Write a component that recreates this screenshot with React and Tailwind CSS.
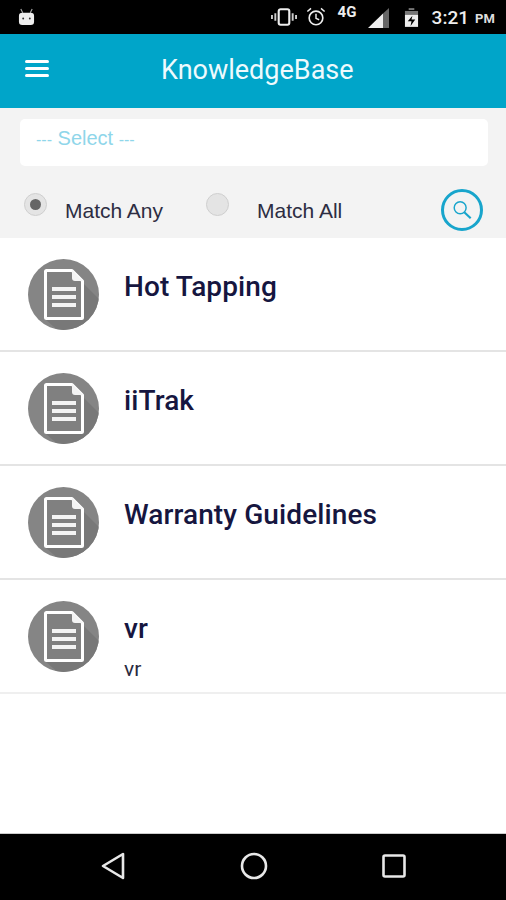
const Doc = () => (
  <svg width="71" height="71" viewBox="0 0 71 71" className="shrink-0">
    <defs>
      <clipPath id="c"><circle cx="35.5" cy="35.5" r="35.5" /></clipPath>
    </defs>
    <circle cx="35.5" cy="35.5" r="35.5" fill="#858585" />
    <path d="M55 24 L80 49 L80 80 L40 80 L18 61 L55 61 Z" fill="#787878" clipPath="url(#c)" />
    <path d="M18.5 11.5 H44 L54.5 22 V58.5 Q54.5 59.5 53.5 59.5 H18.5 Q17.5 59.5 17.5 58.5 V12.5 Q17.5 11.5 18.5 11.5 Z" fill="#808080" stroke="#fff" strokeWidth="3" strokeLinejoin="round" />
    <path d="M44 11 V19 Q44 22 47 22 H55 Z" fill="#f4f4f4" />
    <rect x="24" y="28" width="24" height="4" fill="#f4f4f4" />
    <rect x="24" y="36" width="24" height="4" fill="#f4f4f4" />
    <rect x="24" y="44" width="24" height="4" fill="#f4f4f4" />
  </svg>
);

const Row = ({ title, sub, last }) => (
  <div className={`h-[114px] flex items-start pl-[28px] pt-[21px] border-b-[2px] ${last ? "border-[#efefef]" : "border-[#e4e4e4]"}`}>
    <Doc />
    <div className="ml-[25px] pt-[10px]">
      <div className="text-[28px] leading-[36px] tracking-[0.1px] font-medium text-[#16163f] [font-family:Roboto,sans-serif]">{title}</div>
      {sub && <div className="mt-[9px] text-[21px] leading-[26px] text-[#2a2a40] [font-family:Roboto,sans-serif]">{sub}</div>}
    </div>
  </div>
);

const Radio = ({ on }) => (
  <div className="w-[23px] h-[23px] rounded-full bg-[#e4e4e4] border border-[#cfcfcf] flex items-center justify-center">
    {on && <div className="w-[11px] h-[11px] rounded-full bg-[#666]" />}
  </div>
);

export default function App() {
  return (
    <div className="w-[506px] h-[900px] flex flex-col bg-white overflow-hidden [font-family:Roboto,sans-serif]">
      <div className="h-[34px] bg-black flex items-center pl-[18px] pr-[10px] text-[#eee]">
        <svg width="17" height="19" viewBox="0 0 18 20" className="mr-auto">
          <path d="M3 1 L5 5 M15 1 L13 5" stroke="#aaa" strokeWidth="1.2" />
          <rect x="1" y="5" width="16" height="13" rx="3.5" fill="#eee" />
          <circle cx="5.5" cy="11" r="1" fill="#333" />
          <circle cx="12.5" cy="11" r="1" fill="#333" />
        </svg>
        <svg width="26" height="20" viewBox="0 0 27 20" className="mr-[9px]">
          <rect x="8" y="2" width="11" height="16" rx="2" fill="none" stroke="#eee" strokeWidth="2.2" />
          <path d="M4.5 6 V14 M1 8 V12 M22.5 6 V14 M26 8 V12" stroke="#ccc" strokeWidth="2" />
        </svg>
        <svg width="20" height="20" viewBox="0 0 22 22" className="mr-[12px]">
          <circle cx="11" cy="12" r="7.5" fill="none" stroke="#eee" strokeWidth="1.8" />
          <path d="M11 7.5 V12.5 L14.5 14 M1.5 5 L5.5 1.5 M20.5 5 L16.5 1.5" fill="none" stroke="#eee" strokeWidth="1.6" />
        </svg>
        <div className="relative w-[51px] h-[28px] mr-[15px]">
          <span className="absolute left-0 top-0 text-[15px] leading-[18px] font-bold text-[#eee]">4G</span>
          <svg width="22" height="20" viewBox="0 0 22 22" preserveAspectRatio="none" className="absolute left-[30px] top-[5px]">
            <path d="M0 22 L15 6 V22 Z" fill="#eee" />
            <path d="M15 6 L21 0 V22 H15 Z" fill="#666" />
          </svg>
        </div>
        <svg width="15" height="21" viewBox="0 0 16 22" className="mr-[13px]">
          <path d="M5 1 H11 V3 H5 Z" fill="#777" />
          <path d="M1 4 H15 V8 H1 Z" fill="#777" />
          <path d="M1 8 H15 V21 H1 Z" fill="#eee" />
          <path d="M9 9 L4 15 H8 L7 20 L12 13 H8 Z" fill="#000" />
        </svg>
        <span className="text-[19px] leading-none font-medium text-[#eee] mr-[6px]">3:21</span>
        <span className="text-[13px] leading-none font-bold text-[#ddd] mt-[3px] w-[21px]">PM</span>
      </div>

      <div className="h-[74px] bg-[#00a5c9] flex items-center relative">
        <div className="ml-[25px] -mt-[5px] w-[24px] flex flex-col gap-[4px]">
          <div className="h-[3px] bg-white rounded-sm" />
          <div className="h-[3px] bg-white rounded-sm" />
          <div className="h-[3px] bg-white rounded-sm" />
        </div>
        <div className="ml-[112px] -mt-[3px] text-[27px] leading-[32px] text-[#eefafd]">KnowledgeBase</div>
      </div>

      <div className="h-[130px] bg-[#f3f3f3] px-[20px] pt-[11px]">
        <div className="h-[47px] bg-white rounded-[5px] pl-[16px] pr-[4px] pt-[5px] w-[468px] text-[20px] leading-[28px] text-[#8fd6ea] [font-family:'Liberation_Sans',sans-serif]">
          <span className="text-[16px]">---</span> Select <span className="text-[16px]">---</span>
        </div>
        <div className="flex items-start mt-[27px] text-[#2d2d42] text-[21px] leading-[26px] [font-family:'Liberation_Sans',sans-serif]">
          <div className="ml-[4px]"><Radio on /></div>
          <span className="ml-[18px] mt-[5px]">Match Any</span>
          <div className="ml-[43px]"><Radio /></div>
          <span className="ml-[28px] mt-[5px]">Match All</span>
          <div className="ml-auto mr-[3px] -mt-[4px] w-[42px] h-[42px] rounded-full border-[3px] border-[#18a5cc] flex items-center justify-center">
            <svg width="22" height="22" viewBox="0 0 24 24" fill="none" stroke="#18a5cc" strokeWidth="1.6">
              <circle cx="10" cy="9.5" r="6.5" />
              <path d="M14.5 14.5 L21.5 21" strokeWidth="2.4" />
            </svg>
          </div>
        </div>
      </div>

      <Row title="Hot Tapping" />
      <Row title="iiTrak" />
      <Row title="Warranty Guidelines" />
      <Row title="vr" sub="vr" last />

      <div className="flex-1" />

      <div className="h-[67px] bg-black border-t border-[#ccc] relative flex items-center">
        <svg width="24" height="28" viewBox="0 0 24 28" className="ml-[101px] mt-[-2px]">
          <path d="M22 2 V26 L2 14 Z" fill="none" stroke="#e8e8e8" strokeWidth="2.6" strokeLinejoin="round" />
        </svg>
        <svg width="28" height="28" viewBox="0 0 28 28" className="ml-[115px] mt-[-2px]">
          <circle cx="14" cy="14" r="12" fill="none" stroke="#e8e8e8" strokeWidth="2.6" />
        </svg>
        <svg width="24" height="24" viewBox="0 0 24 24" className="ml-[114px] mt-[-2px]">
          <rect x="1.5" y="1.5" width="21" height="21" rx="1.5" fill="none" stroke="#e8e8e8" strokeWidth="2.6" />
        </svg>
      </div>
    </div>
  );
}
